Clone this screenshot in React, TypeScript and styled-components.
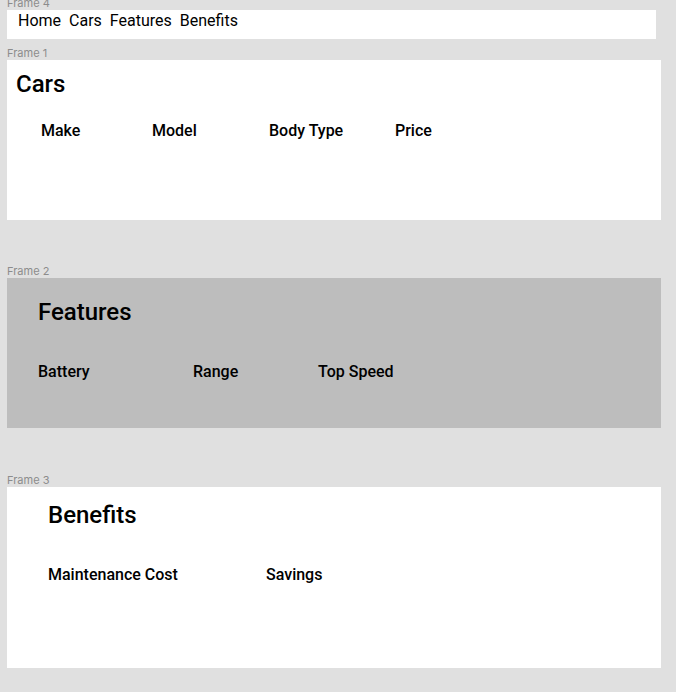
import React from "react";
import styled, { createGlobalStyle } from "styled-components";

const GlobalStyle = createGlobalStyle`
  html, body {
    margin: 0;
    padding: 0;
    background: #e0e0e0;
    overflow: hidden;
  }
  body {
    font-family: Roboto, "Liberation Sans", sans-serif;
    color: #000000;
  }
`;

const Canvas = styled.div`
  display: flex;
  flex-direction: column;
  padding-left: 7px;
  margin-top: -4px;
`;

const FrameGroup = styled.section<{ $gap?: number }>`
  display: flex;
  flex-direction: column;
  margin-top: ${(p) => p.$gap ?? 0}px;
`;

const FrameLabel = styled.div`
  font-family: Inter, "Noto Sans", sans-serif;
  font-size: 11px;
  line-height: 14px;
  color: #8c8c8c;
`;

const Frame = styled.div<{
  $width: number;
  $height: number;
  $bg?: string;
  $padTop: number;
  $padLeft: number;
}>`
  box-sizing: border-box;
  width: ${(p) => p.$width}px;
  height: ${(p) => p.$height}px;
  background: ${(p) => p.$bg ?? "#ffffff"};
  padding: ${(p) => p.$padTop}px 0 0 ${(p) => p.$padLeft}px;
  display: flex;
  flex-direction: column;
`;

const Nav = styled.nav`
  display: flex;
  gap: 8px;
  padding-left: 11px;
  font-size: 16px;
  line-height: 19px;
`;

const NavLink = styled.a`
  color: #000000;
  text-decoration: none;
`;

const Heading = styled.h2`
  margin: 0;
  font-size: 24px;
  line-height: 28px;
  font-weight: 500;
`;

const Row = styled.div<{ $indent?: number; $gap: number }>`
  display: flex;
  margin-top: ${(p) => p.$gap}px;
  padding-left: ${(p) => p.$indent ?? 0}px;
`;

const Cell = styled.div<{ $width?: number }>`
  ${(p) => (p.$width ? `width: ${p.$width}px;` : "")}
  flex-shrink: 0;
  font-size: 16px;
  line-height: 19px;
  font-weight: 500;
`;

function App() {
  return (
    <>
      <GlobalStyle />
      <Canvas>
        <FrameGroup>
          <FrameLabel>Frame 4</FrameLabel>
          <Frame $width={649} $height={29} $padTop={1} $padLeft={0}>
            <Nav>
              <NavLink href="#home">Home</NavLink>
              <NavLink href="#cars">Cars</NavLink>
              <NavLink href="#features">Features</NavLink>
              <NavLink href="#benefits">Benefits</NavLink>
            </Nav>
          </Frame>
        </FrameGroup>

        <FrameGroup $gap={7}>
          <FrameLabel>Frame 1</FrameLabel>
          <Frame $width={654} $height={160} $padTop={10} $padLeft={9}>
            <Heading>Cars</Heading>
            <Row $indent={25} $gap={23}>
              <Cell $width={111}>Make</Cell>
              <Cell $width={117}>Model</Cell>
              <Cell $width={126}>Body Type</Cell>
              <Cell>Price</Cell>
            </Row>
          </Frame>
        </FrameGroup>

        <FrameGroup $gap={44}>
          <FrameLabel>Frame 2</FrameLabel>
          <Frame $width={654} $height={150} $bg="#bdbdbd" $padTop={20} $padLeft={31}>
            <Heading>Features</Heading>
            <Row $gap={36}>
              <Cell $width={155}>Battery</Cell>
              <Cell $width={125}>Range</Cell>
              <Cell>Top Speed</Cell>
            </Row>
          </Frame>
        </FrameGroup>

        <FrameGroup $gap={45}>
          <FrameLabel>Frame 3</FrameLabel>
          <Frame $width={654} $height={181} $padTop={14} $padLeft={41}>
            <Heading>Benefits</Heading>
            <Row $gap={36}>
              <Cell $width={218}>Maintenance Cost</Cell>
              <Cell>Savings</Cell>
            </Row>
          </Frame>
        </FrameGroup>
      </Canvas>
    </>
  );
}

export default App;
